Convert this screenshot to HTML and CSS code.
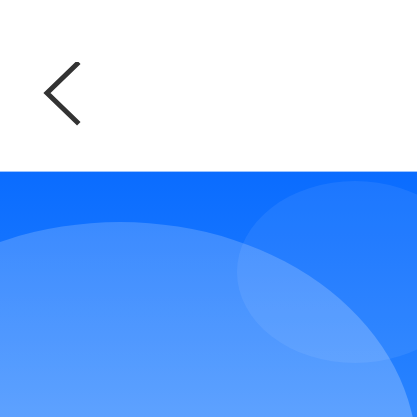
FILE: index.html
```html
<!DOCTYPE html>
<html>
<head>
<meta charset="utf-8">
<link rel="stylesheet" href="styles.css">
</head>
<body>
<header class="topbar">
  <button class="back" aria-label="back">
    <svg width="40" height="70" viewBox="0 0 40 70">
      <polyline points="35,2 5,31 35,60" fill="none" stroke="#333333" stroke-width="5" stroke-linecap="square"/>
    </svg>
  </button>
</header>
<section class="hero">
  <div class="blob blob-small"></div>
  <div class="blob blob-big"></div>
</section>
</body>
</html>
```
FILE: styles.css
```css
html, body {
  margin: 0;
  padding: 0;
  background: #ffffff;
  font-family: "Liberation Sans", Arial, sans-serif;
}
.topbar {
  height: 171px;
  box-sizing: border-box;
  padding: 62px 0 0 42px;
}
.back {
  display: block;
  border: 0;
  padding: 0;
  background: none;
  width: 40px;
  height: 70px;
}
.back svg { display: block; }
.hero {
  position: relative;
  height: 246px;
  overflow: hidden;
  background: linear-gradient(180deg, #0a6cff 0%, #2a84ff 100%);
  border-top: 1px solid #9cc4ff;
  box-sizing: border-box;
}
.blob {
  position: absolute;
  border-radius: 50%;
}
.blob-small {
  left: 237px;
  top: 9px;
  width: 236px;
  height: 182px;
  background: rgba(255, 255, 255, 0.07);
}
.blob-big {
  left: -177px;
  top: 50px;
  width: 594px;
  height: 470px;
  background: linear-gradient(180deg, rgba(255,255,255,0.18) 0%, rgba(255,255,255,0.24) 40%);
}
```
